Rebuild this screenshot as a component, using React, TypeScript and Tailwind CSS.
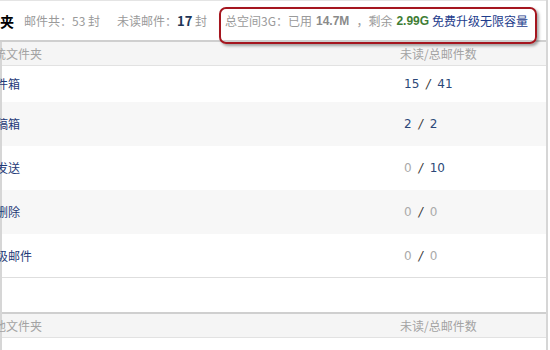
import React from "react";

const rows = [
  { name: "收件箱", unread: "15", total: "41", bg: false },
  { name: "草稿箱", unread: "2", total: "2", bg: true },
  { name: "已发送", unread: "0", total: "10", bg: false },
  { name: "已删除", unread: "0", total: "0", bg: true },
  { name: "垃圾邮件", unread: "0", total: "0", bg: false },
];

function Num({ v }: { v: string }) {
  const zero = v === "0";
  return <span className={zero ? "text-[#aaaaaa]" : "text-[#2b4778]"}>{v}</span>;
}

export default function App() {
  return (
    <div className="relative w-[550px] h-[350px] overflow-hidden bg-white text-[12px] font-['Noto_Sans_CJK_SC',sans-serif]">
      <div className="w-[548px] h-full border-r-2 border-[#d6d6d6] flex flex-col">
        {/* top header */}
        <div className="h-[40px] shrink-0 border-t border-[#e4e4e4] flex items-center text-[#9a9a9a] leading-none whitespace-nowrap">
          <span className="text-[14px] font-bold text-black">夹</span>
          <span className="ml-[10px]">邮件共：53 封</span>
          <span className="ml-[17px]">
            未读邮件：<span className="font-bold text-[13px] text-[#1e3556]">17</span> 封
          </span>
          <span className="ml-[18px]">总空间3G：已用</span>
          <span className="ml-[4px] font-bold text-[#8a8a8a] font-['Liberation_Sans',sans-serif]">14.7M</span>
          <span className="ml-[7px]">，剩余</span>
          <span className="ml-[4px] font-bold text-[#3f7d35] font-['Liberation_Sans',sans-serif]">2.99G</span>
          <span className="ml-[3px] text-[#1d3c8c]">免费升级无限容量</span>
        </div>
        <div className="h-[2px] shrink-0 bg-[#cfcfcf]" />
        {/* table */}
        <div className="flex-1 flex flex-col border-l-2 border-[#d6d6d6]">
          <div className="h-[24px] shrink-0 bg-[#f5f5f5] border-b border-[#e2e2e2] flex items-center text-[#a3a3a3] whitespace-nowrap">
            <span className="ml-[-20px] w-[418px]">系统文件夹</span>
            <span>未读/总邮件数</span>
          </div>
          {rows.map((r, i) => (
            <div
              key={r.name}
              className={`${i === 0 ? "h-[36px]" : "h-[44px]"} shrink-0 flex items-center whitespace-nowrap ${r.bg ? "bg-[#f7f7f7]" : "bg-white"} ${i === rows.length - 1 ? "border-b border-[#dedede]" : ""}`}
            >
              <span className="ml-[-18px] w-[418px] text-[#1f3a78]">{r.name}</span>
              <span className="flex items-center font-['DejaVu_Sans',sans-serif] text-[12px] pl-[2px]">
                <Num v={r.unread} />
                <span className="mx-[7px] text-[#333] italic">/</span>
                <Num v={r.total} />
              </span>
            </div>
          ))}
          <div className="h-[34px] shrink-0 bg-white" />
          <div className="h-[2px] shrink-0 bg-[#cfcfcf]" />
          <div className="h-[24px] shrink-0 bg-[#f5f5f5] border-b border-[#e2e2e2] flex items-center text-[#a3a3a3] whitespace-nowrap">
            <span className="ml-[-20px] w-[418px]">其他文件夹</span>
            <span>未读/总邮件数</span>
          </div>
          <div className="flex-1 bg-white" />
        </div>
      </div>
      {/* highlight box */}
      <div className="absolute left-[219px] top-[7px] w-[318px] h-[37px] rounded-[7px] border-2 border-[#a5161f] shadow-[2px_2px_3px_rgba(0,0,0,0.35)]" />
    </div>
  );
}
